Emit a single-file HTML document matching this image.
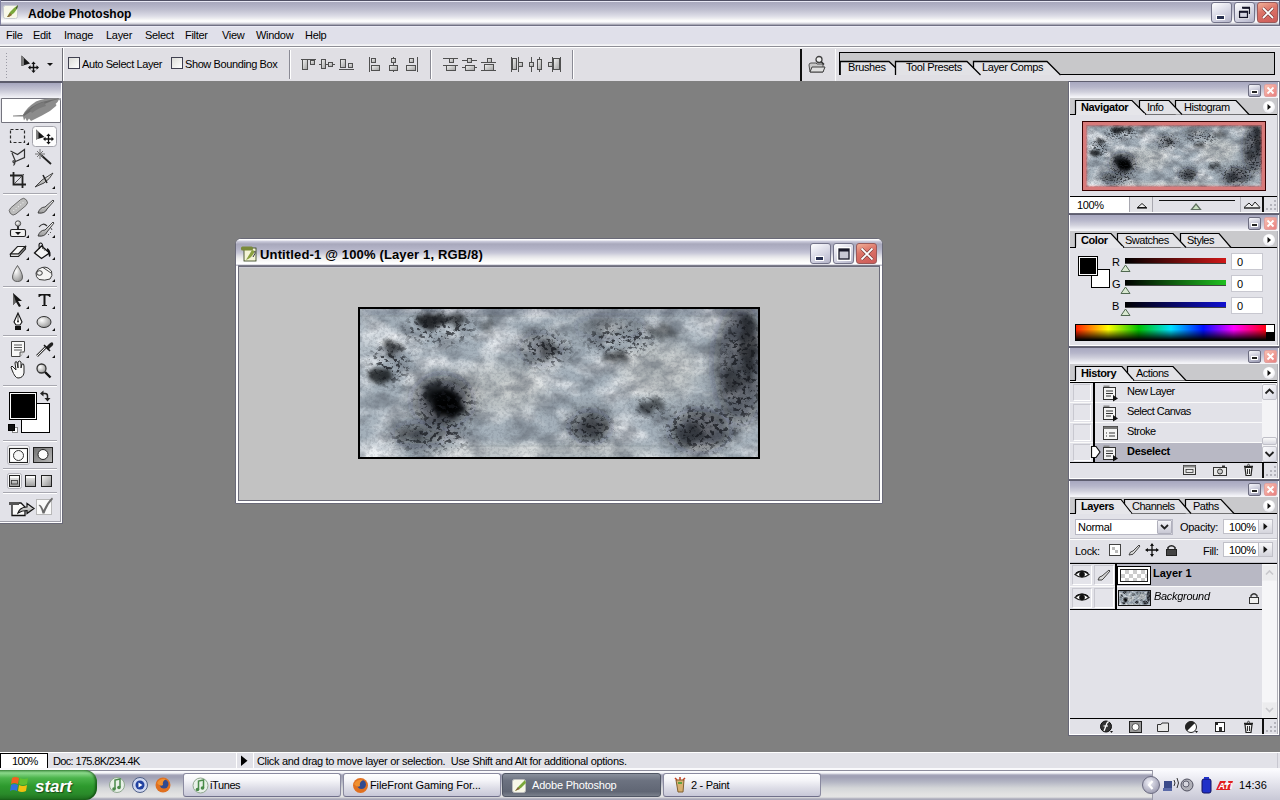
<!DOCTYPE html>
<html><head><meta charset="utf-8">
<style>
*{margin:0;padding:0;box-sizing:border-box}
html,body{width:1280px;height:800px;overflow:hidden;background:#808080;font-family:"Liberation Sans",sans-serif;font-size:11px;color:#000}
.a{position:absolute}
.t{position:absolute;white-space:nowrap;line-height:1}
/* title bar */
#title{left:0;top:0;width:1280px;height:26px;background:linear-gradient(#505064 0,#505064 1px,#e8e8f4 1px,#e8e8f4 2px,#a8a8bc 2px,#b0b0c4 5px,#c0c0d0 10px,#dcdce6 16px,#f0f0f2 19px,#ffffff 21px,#f8f8fa 22px,#c8c8d2 24px,#8a8a98 25px);}
#title .bl{left:0;top:24px;width:1280px;height:1px;background:#8a8a9a}
.xpbtn{position:absolute;width:21px;height:21px;border:1px solid #74748a;border-radius:3px;background:linear-gradient(150deg,#ffffff 0,#e4e4ee 35%,#c4c4d6 80%,#b0b0c4 100%)}
.xpclose{border-color:#9a5a5a;background:linear-gradient(160deg,#f0b098 0,#dc7468 40%,#cc5a58 100%)}
#menu{left:0;top:26px;width:1280px;height:20px;background:#e0e0ea}
#menu .t{top:4px;font-size:11px;letter-spacing:-0.3px}
.tah{font-size:11px;letter-spacing:-0.4px}
.sep{left:3px;width:54px;height:2px;background:linear-gradient(#a8a8b0 0 1px,#fff 1px)}
.pmin{width:13px;height:13px;border:1px solid #6c6c80;border-radius:2px;background:linear-gradient(160deg,#f8f8fc,#c8c8d8 50%,#9898b0)}
.pmin:after{content:"";position:absolute;left:3px;top:6px;width:5px;height:2px;background:#222;box-shadow:0 0 0 1px #fff}
.pcls{width:13px;height:13px;border:1px solid #e0a0a0;border-radius:2px;background:linear-gradient(135deg,#f8c0b0,#e88080)}
.sbtn{width:15px;height:16px;background:linear-gradient(135deg,#fcfcfe,#d8d8e2);border:1px solid #c4c4cc;border-radius:2px}
.sbtn svg{position:absolute;left:-1px;top:-1px}
.tbtn{position:absolute;width:158px;height:24px;border:1px solid #8a8aa0;border-bottom-color:#70708a;border-radius:3px;background:linear-gradient(#ffffff,#f4f4f8 30%,#dcdce6 65%,#c8c8d8)}
.cb{width:12px;height:12px;border:1px solid #404050;background:linear-gradient(135deg,#dcdcd8,#fff)}
#opts{left:0;top:46px;width:1280px;height:35px;background:#e0dfe4;border-top:1px solid #8e8e96}
</style></head><body>
<div id="title" class="a">
  <div class="a" style="left:0;top:25px;width:1280px;height:1px;background:#707084"></div>
  <div class="a" style="left:0;top:0;width:1px;height:25px;background:#8080a0"></div>
  <div class="a" style="left:1279px;top:0;width:1px;height:25px;background:#606078"></div>
  <svg class="a" style="left:3px;top:3px" width="16" height="17" viewBox="0 0 16 17">
    <rect x="0.5" y="2.5" width="14" height="13" rx="2" fill="#f8f8e8" stroke="#c8ccd0"/>
    <path d="M4 14 L7 9 L11 5 L15 2 L14 6 L11 10 L7 13 Z" fill="#7aa83a"/>
    <path d="M4 14 L7 10 L9 12 L6 14 Z" fill="#8a6a3a"/>
    <path d="M15 2 L14 6 L13 5 Z" fill="#303030"/>
  </svg>
  <div class="t" style="left:28px;top:8px;font-size:12px;font-weight:bold;color:#000">Adobe Photoshop</div>
  <div class="xpbtn" style="left:1211px;top:2px"><div class="a" style="left:4px;top:12px;width:9px;height:5px;background:#fff"></div><div class="a" style="left:5px;top:13px;width:7px;height:3px;background:#283050"></div></div>
  <div class="xpbtn" style="left:1234px;top:2px">
    <svg class="a" style="left:0;top:0" width="21" height="21"><path d="M7.5 5 H14.5 V11" fill="none" stroke="#fff" stroke-width="3"/><rect x="4.5" y="8.5" width="8" height="6" fill="none" stroke="#fff" stroke-width="2.6"/><path d="M7.5 5 H14.5 V11" fill="none" stroke="#141428" stroke-width="1.4"/><path d="M7 4.6 H15" stroke="#141428" stroke-width="1.8"/><rect x="4.5" y="8.5" width="8" height="6" fill="#d4d4e0" stroke="#141428" stroke-width="1.3"/><rect x="4" y="7.8" width="9" height="2" fill="#141428"/></svg>
  </div>
  <div class="xpbtn xpclose" style="left:1257px;top:2px">
    <svg class="a" style="left:0;top:0" width="21" height="21"><path d="M5 5 L15 15 M15 5 L5 15" stroke="#603030" stroke-width="3"/><path d="M5 5 L15 15 M15 5 L5 15" stroke="#fff" stroke-width="1.8"/></svg>
  </div>
</div>
<div id="menu" class="a">
  <div class="a" style="left:0;top:0;width:1280px;height:1px;background:#ececf6"></div>
  <div class="a" style="left:0;top:18px;width:1280px;height:2px;background:linear-gradient(#ececf0,#f8f8fa)"></div>
  <div class="t" style="left:6px">File</div>
  <div class="t" style="left:33px">Edit</div>
  <div class="t" style="left:64px">Image</div>
  <div class="t" style="left:106px">Layer</div>
  <div class="t" style="left:145px">Select</div>
  <div class="t" style="left:185px">Filter</div>
  <div class="t" style="left:222px">View</div>
  <div class="t" style="left:256px">Window</div>
  <div class="t" style="left:305px">Help</div>
</div>
<div id="opts" class="a">
  <div class="a" style="left:0;top:0;width:1280px;height:1px;background:#fff"></div>
  <!-- gripper -->
  <div class="a" style="left:6px;top:6px;width:1px;height:25px;background:repeating-linear-gradient(#9a9aa4 0 1px,transparent 1px 3px)"></div>
  <svg class="a" style="left:19px;top:7px" width="36" height="20" viewBox="0 0 36 20">
    <path d="M2.5 1.5 L11 9.5 L2.5 12 Z" fill="#151515"/>
    <path d="M2.5 1.5 L5 4 V11 L2.5 12 Z" fill="#7a7a7a"/>
    <path d="M14.5 9.5 V17 M10.5 13.5 H18.5" stroke="#111" stroke-width="1.4"/>
    <path d="M14.5 7.5 L12.3 10 H16.7 Z M14.5 19 L12.3 16.5 H16.7 Z M9 13.5 L11.5 11.3 V15.7 Z M20 13.5 L17.5 11.3 V15.7 Z" fill="#111"/>
    <path d="M28 9 H34 L31 12 Z" fill="#111"/>
  </svg>
  <div class="a" style="left:62px;top:1px;width:1px;height:33px;background:#707078"></div>
  <div class="a" style="left:63px;top:1px;width:1px;height:33px;background:#fff"></div>
  <div class="a cb" style="left:68px;top:10px"></div>
  <div class="t tah" style="left:82px;top:12px">Auto Select Layer</div>
  <div class="a cb" style="left:171px;top:10px"></div>
  <div class="t tah" style="left:185px;top:12px">Show Bounding Box</div>
  <div class="a" style="left:289px;top:3px;width:1px;height:29px;background:#8a8a94"></div>
  <div class="a" style="left:290px;top:3px;width:1px;height:29px;background:#fff"></div>
  <svg class="a" style="left:295px;top:6px" width="275" height="24" viewBox="295 52 275 24">
    <defs><linearGradient id="agr" x1="0" y1="0" x2="1" y2="1"><stop offset="0" stop-color="#f4f4f4"/><stop offset="1" stop-color="#a0a0a0"/></linearGradient></defs>
    <g fill="url(#agr)" stroke="#505050" stroke-width="1">
      <path d="M301 58.5 H316" fill="none"/>
      <rect x="302.5" y="58.5" width="5" height="10"/><rect x="310.5" y="59.5" width="4" height="4"/>
      <path d="M319 63.5 H335" fill="none"/>
      <rect x="321.5" y="58.5" width="4" height="9"/><rect x="328.5" y="61.5" width="4" height="4"/>
      <path d="M339 68.5 H354" fill="none"/>
      <rect x="340.5" y="58.5" width="5" height="8"/><rect x="348.5" y="62.5" width="4" height="4"/>
      <path d="M369.5 56 V71" fill="none"/>
      <rect x="371.5" y="57.5" width="4" height="4"/><rect x="371.5" y="64.5" width="8" height="5"/>
      <path d="M393.5 56 V71" fill="none"/>
      <rect x="391.5" y="57.5" width="4" height="4"/><rect x="389.5" y="64.5" width="8" height="5"/>
      <path d="M417.5 56 V71" fill="none"/>
      <rect x="409.5" y="57.5" width="4" height="4"/><rect x="406.5" y="64.5" width="9" height="5"/>
      <path d="M443 57.5 H458 M443 64.5 H458" fill="none"/>
      <rect x="449.5" y="57.5" width="4" height="4"/><rect x="446.5" y="64.5" width="9" height="5"/>
      <path d="M462 59.5 H477 M462 66.5 H477" fill="none"/>
      <rect x="467.5" y="57.5" width="4" height="4"/><rect x="465.5" y="64.5" width="9" height="5"/>
      <path d="M481 61.5 H496 M481 69.5 H496" fill="none"/>
      <rect x="487.5" y="57.5" width="4" height="4"/><rect x="484.5" y="63.5" width="9" height="6"/>
      <path d="M511.5 56 V71 M518.5 56 V71" fill="none"/>
      <rect x="512.5" y="57.5" width="4" height="11"/><rect x="518.5" y="61.5" width="4" height="4"/>
      <path d="M531.5 56 V71 M539.5 56 V71" fill="none"/>
      <rect x="529.5" y="61.5" width="4" height="4"/><rect x="537.5" y="58.5" width="4" height="10"/>
      <path d="M552.5 56 V71 M560.5 56 V71" fill="none"/>
      <rect x="548.5" y="61.5" width="4" height="4"/><rect x="553.5" y="57.5" width="6" height="11"/>
    </g>
  </svg>
  <div class="a" style="left:430px;top:3px;width:1px;height:29px;background:#8a8a94"></div>
  <div class="a" style="left:431px;top:3px;width:1px;height:29px;background:#fff"></div>
  <div class="a" style="left:572px;top:3px;width:1px;height:29px;background:#8a8a94"></div>
  <div class="a" style="left:573px;top:3px;width:1px;height:29px;background:#fff"></div>
  <div class="a" style="left:800px;top:2px;width:1.5px;height:32px;background:#101010"></div><div class="a" style="left:835px;top:2px;width:1px;height:32px;background:#fafafa"></div>
  <!-- file browser icon -->
  <svg class="a" style="left:808px;top:8px" width="22" height="20" viewBox="0 0 22 20">
    <path d="M1 10 Q1 8 3 8 H8 L9 9 H15 V17 H2 Z" fill="#c8c8c8" stroke="#505050"/>
    <path d="M2 17 L4 12 H17 L15 17 Z" fill="#e0e0e0" stroke="#404040"/>
    <circle cx="11" cy="4.5" r="3" fill="#f0f0f0" stroke="#404040" stroke-width="1.3"/>
    <path d="M13 6.5 L16 9.5" stroke="#303030" stroke-width="1.6"/>
  </svg>
  <!-- palette well -->
  <div class="a" style="left:839px;top:5px;width:436px;height:23px;background:#c8c8ca;border:1px solid #000;border-width:1.5px 1.5px 1px 1.5px"></div>
  <svg class="a" style="left:840px;top:13px" width="230" height="16" viewBox="840 59 230 16">
    <path d="M840.2 74 V60.5 H889 L898 69 V74" fill="#e2e2e6" stroke="#000" stroke-width="1.3"/>
    <path d="M973.5 74 V60.5 H1047 L1060.5 74" fill="#e2e2e6" stroke="#000" stroke-width="1.3"/>
    <path d="M895.5 74 V60.5 H967 L980.5 74" fill="#e2e2e6" stroke="#000" stroke-width="1.3"/>
  </svg>
  <div class="t tah" style="left:848px;top:15px">Brushes</div>
  <div class="t tah" style="left:906px;top:15px">Tool Presets</div>
  <div class="t tah" style="left:982px;top:15px">Layer Comps</div>
</div>
<!-- toolbox -->
<div id="tools" class="a" style="left:0;top:81px;width:63px;height:443px;background:#e2e2e8">
  <div class="a" style="left:0;top:0;width:63px;height:2px;background:#5c5c6c"></div>
  <div class="a" style="left:62px;top:0;width:1px;height:443px;background:#6a6a78"></div>
  <div class="a" style="left:61px;top:2px;width:1px;height:440px;background:#fff"></div>
  <div class="a" style="left:0;top:442px;width:63px;height:1px;background:#6a6a78"></div>
  <div class="a" style="left:0;top:441px;width:62px;height:1px;background:#fff"></div>
  <div class="a" style="left:0;top:440px;width:61px;height:1px;background:#a0a0aa"></div>
  <div class="a" style="left:60px;top:17px;width:1px;height:424px;background:#a0a0aa"></div>
  <div class="a" style="left:0;top:2px;width:61px;height:15px;background:linear-gradient(#a6a6be,#c8c8d6 50%,#f4f4f8)"></div>
  <!-- feather box -->
  <div class="a" style="left:1px;top:17px;width:60px;height:25px;background:#fff;border:1px solid #74747e;border-radius:0 3px 0 0"></div>
  <svg class="a" style="left:0px;top:17px" width="62" height="25" viewBox="0 98 62 25">
    <path d="M13 115.5 Q18 114.8 23 115 Q26 108 36 101.5 Q46 97.5 59.5 98.5 Q58 102 55.5 104 Q57 104.5 56 106 Q50 112 42 115.5 Q36 118.5 31 121 L29 118.5 L27 121.5 L25.5 118 L24 120.5 L23 116.5 Q18 116.5 13 116.5 Z" fill="#8c8c8c"/>
    <path d="M23 115 Q30 106 42 102 Q50 99.5 59.5 98.5 Q50 101 42 105 Q32 110 24 116 Z" fill="#6c6c6c"/>
    <path d="M30 110 Q36 104 44 102 L46 106 Q38 108 32 113 Z" fill="#7a7a7a"/>
  </svg>
  <!-- separators -->
  <div class="a sep" style="top:112px"></div>
  <div class="a sep" style="top:205px"></div>
  <div class="a sep" style="top:254px"></div>
  <div class="a sep" style="top:304px"></div>
  <div class="a sep" style="top:359px"></div>
  <div class="a sep" style="top:387px"></div>
  <div class="a sep" style="top:411px"></div>
</div>
<svg class="a" style="left:0;top:0" width="63" height="524" viewBox="0 0 63 524">
  <defs>
    <linearGradient id="gg" x1="0" y1="0" x2="1" y2="1"><stop offset="0" stop-color="#fafafa"/><stop offset="1" stop-color="#8c8c8c"/></linearGradient>
    <linearGradient id="gv" x1="0" y1="0" x2="0" y2="1"><stop offset="0" stop-color="#f4f4f4"/><stop offset="1" stop-color="#9a9a9a"/></linearGradient>
    <linearGradient id="gqm" x1="0" y1="0" x2="1" y2="1"><stop offset="0" stop-color="#707070"/><stop offset="1" stop-color="#b8b8b8"/></linearGradient>
    <radialGradient id="gr" cx="0.35" cy="0.35" r="0.8"><stop offset="0" stop-color="#fff"/><stop offset="1" stop-color="#8a8a8a"/></radialGradient>
  </defs>
  <g fill="#111">
    <!-- corner triangles -->
    <path d="M29 142 V145 H26 Z M29 164 V167 H26 Z M55 186 V189 H52 Z M29 213 V216 H26 Z M55 213 V216 H52 Z M29 235 V238 H26 Z M55 235 V238 H52 Z M29 257 V260 H26 Z M55 257 V260 H52 Z M29 279 V282 H26 Z M55 279 V282 H52 Z M29 306 V309 H26 Z M55 306 V309 H52 Z M29 328 V331 H26 Z M55 328 V331 H52 Z M29 355 V358 H26 Z M55 355 V358 H52 Z"/>
  </g>
  <!-- marquee -->
  
  <!-- move selected -->
  <rect x="32.5" y="126.5" width="24" height="20" rx="3" fill="#fdfdfd" stroke="#a4a4ac"/>
  <path d="M36 129.5 L44.5 137 L36 139.5 Z" fill="#141414"/>
  <path d="M36 129.5 L38.5 132 V138.5 L36 139.5 Z" fill="#808080"/>
  <path d="M48.5 135.5 V142.5 M45 139 H52" stroke="#111" stroke-width="1.3"/>
  <path d="M48.5 133.5 L46.3 136 H50.7 Z M48.5 144.5 L46.3 142 H50.7 Z M43 139 L45.5 136.8 V141.2 Z M54 139 L51.5 136.8 V141.2 Z" fill="#111"/>
  <!-- marquee fix -->
  <rect x="10.5" y="129.5" width="14" height="13" fill="none" stroke="#2a2a2a" stroke-width="1.2" stroke-dasharray="3 2"/>
<!-- lasso -->
  <path d="M10.5 151 L17.5 154.5 L24.5 149.5 V157.5 L15.5 161.5 L12 153" fill="none" stroke="#303030" stroke-width="1.2"/>
  <path d="M15.5 161.5 Q12.5 160 13 162 Q14 164 15 162 Q15 164.5 13.5 165.5" fill="none" stroke="#303030" stroke-width="1.1"/>
  <!-- magic wand -->
  <path d="M41 155 L51 164" stroke="#222" stroke-width="1.8"/>
  <path d="M40 149 V159 M35 154 H45 M37 151 L43 157 M43 151 L37 157" stroke="#666" stroke-width="0.9"/>
  <!-- crop -->
  <path d="M13.5 172 V184.5 H26 M10 175.5 H22.5 V188" fill="none" stroke="#222" stroke-width="1.8"/>
  <path d="M14 184 L24 174" stroke="#444" stroke-width="0.9"/>
  <!-- slice -->
  <path d="M35 187 L42 180 L53 173 Q50 179 44 183 Z" fill="url(#gv)" stroke="#333" stroke-width="0.9"/>
  <path d="M43 175 L47 183" stroke="#222" stroke-width="1.5"/>
  <!-- healing -->
  <g transform="rotate(-40 18 207)"><rect x="8" y="203" width="21" height="8" rx="4" fill="#bdbdbd" stroke="#666" stroke-width="0.9"/><path d="M12 207 h1 M15 207 h1 M18 207 h1 M21 207 h1 M24 207 h1" stroke="#eee" stroke-width="1"/></g>
  <!-- brush -->
  <path d="M38 213 Q40 207 45 207 L53 200 L54 201 L47 209 Q45 214 38 213 Z" fill="url(#gv)" stroke="#333" stroke-width="0.9"/>
  <!-- stamp -->
  <circle cx="18" cy="223.5" r="2.7" fill="url(#gr)" stroke="#333" stroke-width="0.8"/>
  <rect x="17" y="226" width="2" height="4" fill="#333"/>
  <rect x="10.5" y="229.5" width="15" height="7" rx="1.5" fill="#f0f0f0" stroke="#222" stroke-width="1.1"/>
  <path d="M15 232 H21 L18 235 Z" fill="#111"/>
  <!-- history brush -->
  <path d="M38 236 Q40 230 45 230 L53 222 L54 223 L47 232 Q45 237 38 236 Z" fill="url(#gv)" stroke="#333" stroke-width="0.9"/>
  <path d="M39 227 Q43 222 47 226" fill="none" stroke="#333" stroke-width="1.2"/>
  <path d="M51 228 l1 2 M50 232 l1 1 M48 234 l1 1" stroke="#333" stroke-width="0.8"/>
  <!-- eraser -->
  <path d="M10.5 254 L17.5 246.5 H25.5 L18.5 254 Z" fill="#f6f6f6" stroke="#222" stroke-width="1.1"/>
  <path d="M10.5 254 V256.5 H18.5 L25.5 249 V246.5 L18.5 254 Z" fill="#dcdcdc" stroke="#222" stroke-width="1.1"/>
  <!-- bucket -->
  <path d="M34.5 253 L41.5 246 L49.5 253 L41.5 258.5 Z" fill="#f4f4f4" stroke="#111" stroke-width="1.3"/>
  <path d="M39.5 249 Q38 242.5 41 243 Q43 243.5 43 249" fill="none" stroke="#111" stroke-width="1.1"/>
  <path d="M42.5 247 L45 251" stroke="#666" stroke-width="0.8"/>
  <path d="M47 248 Q51 250 50.5 256 L49 257 Q48.5 252 47 250 Z" fill="#111"/>
  <!-- blur drop -->
  <path d="M17.5 265.5 Q12.5 273 12.5 277 Q12.5 281.5 17.5 281.5 Q22.5 281.5 22.5 277 Q22.5 273 17.5 265.5 Z" fill="url(#gr)" stroke="#555" stroke-width="0.9"/>
  <!-- smudge -->
  <path d="M36 273 Q37 268.5 42 267.5 Q45 266.5 48 268 L51.5 271 Q53 276 50 279 Q45 281 39 279.5 Q35.5 277 36 273 Z" fill="#f4f4f4" stroke="#3a3a3a" stroke-width="1"/>
  <path d="M43 267.5 L51 273" stroke="#3a3a3a" stroke-width="0.9"/>
  <ellipse cx="39.5" cy="273" rx="2.8" ry="2.3" fill="none" stroke="#3a3a3a" stroke-width="1"/>
  <!-- path select arrow -->
  <path d="M13 293 L13 305 L16 302 L19 307 L21 306 L18 301 L22 301 Z" fill="#151515"/>
  <path d="M13 293 V305 L16 302 Z" fill="#666"/>
  <!-- type T -->
  <path d="M38.5 294 H50.5 V297 H49.5 Q49 295.5 47 295.5 H45.5 V305 H47 V306 H42 V305 H43.5 V295.5 H42 Q40 295.5 39.5 297 H38.5 Z" fill="#151515"/>
  <!-- pen -->
  <path d="M18 313 L14 322 L16 325 H20 L22 322 Z" fill="#fff" stroke="#111" stroke-width="1.1"/>
  <path d="M18 314 V321" stroke="#111" stroke-width="0.8"/><circle cx="18" cy="321.5" r="0.9" fill="#111"/>
  <rect x="15" y="326" width="6" height="4" fill="#111"/>
  <!-- ellipse -->
  <ellipse cx="44" cy="322" rx="7" ry="5.5" fill="url(#gr)" stroke="#333" stroke-width="1"/>
  <!-- notes -->
  <path d="M11.5 341.5 H24.5 V351 L20 356.5 H11.5 Z" fill="#f8f8f8" stroke="#444" stroke-width="1"/>
  <path d="M20 356.5 V352 H24.5" fill="#ddd" stroke="#444" stroke-width="0.9"/>
  <path d="M14 345 H22 M14 347.5 H22 M14 350 H22" stroke="#444" stroke-width="0.9"/>
  <!-- eyedropper -->
  <path d="M37 356 L46 347" stroke="#444" stroke-width="2.6"/><path d="M37 356 L46 347" stroke="#eee" stroke-width="1"/>
  <path d="M46 347 L49 344 Q52 341 53 343 Q54 345 51 347 L48 350 Z" fill="#222"/>
  <path d="M44 345 L50 351" stroke="#111" stroke-width="1.6"/>
  <!-- hand -->
  <path d="M12 370 Q10 366 12 366 L16 370 L15 363 Q15 361 17 362 L18 368 L18 362 Q19 360 21 362 L21 368 L22 364 Q24 363 24 366 L24 373 Q23 378 18 378 Q15 378 12 370 Z" fill="#f8f8f8" stroke="#222" stroke-width="1"/>
  <!-- zoom -->
  <circle cx="41.5" cy="368.5" r="4.5" fill="url(#gr)" stroke="#333" stroke-width="1.3"/>
  <path d="M45 372 L50.5 377.5" stroke="#111" stroke-width="2.4"/>
  <!-- colors -->
  <rect x="21.5" y="403.5" width="28" height="29" fill="#fff" stroke="#000"/>
  <rect x="9.5" y="392.5" width="27" height="27" fill="#000" stroke="#000"/>
  <rect x="10.5" y="393.5" width="25" height="25" fill="none" stroke="#fff"/>
  <rect x="11.5" y="394.5" width="23" height="23" fill="#000"/>
  <path d="M42 393.5 H45 Q47.5 393.5 47.5 396 V398.5" fill="none" stroke="#222" stroke-width="1.5"/><path d="M40 393.5 L43.5 390.5 V396.5 Z M44.5 398 H50.5 L47.5 401.5 Z" fill="#222"/>
  <rect x="12.5" y="427.5" width="5" height="5" fill="#fff" stroke="#888"/>
  <rect x="8.5" y="424.5" width="6" height="6" fill="#111" stroke="#000"/>
  <!-- quick mask -->
  <rect x="7.5" y="445.5" width="22" height="19" rx="2.5" fill="#fafafa" stroke="#b4b4bc"/>
  <rect x="9.5" y="448.5" width="18" height="14" fill="#fff" stroke="#222" stroke-width="1.1"/>
  <circle cx="18.5" cy="455.5" r="5" fill="#f6f6f6" stroke="#333"/>
  <rect x="33.5" y="447.5" width="19" height="15" fill="url(#gqm)" stroke="#222"/>
  <circle cx="43" cy="454.5" r="5" fill="#fcfcfc" stroke="#222"/>
  <!-- screen modes -->
  <rect x="7.5" y="473.5" width="14" height="15" rx="2" fill="#f6f6f8" stroke="#b0b0b8"/>
  <rect x="9.5" y="475.5" width="10" height="11" fill="url(#gv)" stroke="#222"/>
  <rect x="10" y="476" width="9" height="2" fill="#fafafa"/>
  <rect x="11.5" y="480.5" width="6" height="3.5" fill="none" stroke="#333" stroke-width="0.8"/>
  <rect x="25.5" y="475.5" width="10" height="11" fill="url(#gv)" stroke="#222"/>
  <rect x="26" y="476" width="9" height="2" fill="#fafafa"/>
  <rect x="41.5" y="475.5" width="10" height="11" fill="url(#gg)" stroke="#222"/>
  <!-- jump to IR -->
  <path d="M12 503 H21 L25 507 V515.5 H12 Z" fill="#fafafa" stroke="#111" stroke-width="1.3"/>
  <rect x="9" y="502" width="10" height="3" fill="#555"/>
  <path d="M18 513 Q20 507 27 507 V503.5 L34 508.5 L27 513.5 V510.5 Q22 510.5 18 513 Z" fill="url(#gv)" stroke="#111" stroke-width="1.2"/>
  <rect x="36.5" y="499.5" width="15" height="15" fill="#fafafa" stroke="#b8b8b8"/>
  <path d="M38.5 505 Q41 504 43.5 510 Q47 502 52 497.5 L53 499 Q48 504 44.5 513.5 L42.5 513.5 Q41 507 38.5 505 Z" fill="#6a6a6a"/>
</svg>
<!-- doc window -->
<div id="doc" class="a" style="left:235px;top:238px;width:648px;height:266px;background:#fff;border:1px solid #6a6a78;border-radius:6px 6px 0 0;overflow:hidden">
  <div class="a" style="left:0;top:0;width:646px;height:27px;background:linear-gradient(#ffffff 0,#ffffff 1px,#d0d0e0 2px,#a8a8bc 5px,#b4b4c8 10px,#c8c8d8 14px,#e0e0e6 17px,#f2f2f2 20px,#ffffff 24px,#ffffff 25px,#c0c0cc 26px)"></div>
  <div class="a" style="left:2px;top:27px;width:642px;height:235px;background:#c2c2c2;border:1px solid #6c6c7a;border-top-width:1px"></div>
  <div class="a" style="left:2px;top:26px;width:642px;height:1px;background:#7c7c8c"></div>
</div>
<div class="a" style="left:239px;top:267px;width:640px;height:1px;background:#cacad2"></div>
<svg class="a" style="left:240px;top:245px" width="18" height="17" viewBox="0 0 18 17">
  <rect x="4" y="3" width="12" height="13" fill="#f4f4d8" stroke="#2a3a10" stroke-width="0.8"/>
  <rect x="1" y="1.5" width="12" height="4" rx="1.5" fill="#7a8a3a"/>
  <path d="M6 15 Q12 13 15 6 L12 5 Q9 10 6 15 Z" fill="#8aa040"/>
  <path d="M15 6 Q16 8 13 12" fill="none" stroke="#334" stroke-width="1"/>
</svg>
<div class="t" style="left:260px;top:248px;font-size:13px;font-weight:bold;letter-spacing:0.15px">Untitled-1 @ 100% (Layer 1, RGB/8)</div>
<div class="xpbtn" style="left:810px;top:243px"><div class="a" style="left:4px;top:12px;width:9px;height:5px;background:#fff"></div><div class="a" style="left:5px;top:13px;width:7px;height:3px;background:#283050"></div></div>
<div class="xpbtn" style="left:833px;top:243px"><svg class="a" style="left:0;top:0" width="21" height="21"><rect x="4" y="4" width="12" height="12" fill="none" stroke="#fff" stroke-width="2"/><rect x="5" y="5" width="10" height="10" fill="#c8c8d4" stroke="#181828" stroke-width="1.3"/><rect x="5" y="5" width="10" height="2.5" fill="#181828"/></svg></div>
<div class="xpbtn xpclose" style="left:856px;top:243px"><svg class="a" style="left:0;top:0" width="21" height="21"><path d="M4.5 4.5 L15.5 15.5 M15.5 4.5 L4.5 15.5" stroke="#603030" stroke-width="3"/><path d="M4.5 4.5 L15.5 15.5 M15.5 4.5 L4.5 15.5" stroke="#fff" stroke-width="1.8"/></svg></div>
<!-- image -->
<div class="a" style="left:358px;top:307px;width:402px;height:152px;border:2px solid #000;background:#a4acb4;overflow:hidden" id="img">
<svg class="a" style="left:0;top:0" width="398" height="148" viewBox="0 0 398 148">
  <defs>
    <filter id="tb" x="0" y="0" width="100%" height="100%">
      <feTurbulence type="fractalNoise" baseFrequency="0.04 0.06" numOctaves="4" seed="7"/>
      <feColorMatrix type="matrix" values="0 0 0 0 0.12  0 0 0 0 0.14  0 0 0 0 0.17  -3.2 0 0 0 1.85" />
    </filter>
    <filter id="tl" x="0" y="0" width="100%" height="100%">
      <feTurbulence type="fractalNoise" baseFrequency="0.025 0.045" numOctaves="3" seed="3"/>
      <feColorMatrix type="matrix" values="0 0 0 0 0.84  0 0 0 0 0.87  0 0 0 0 0.9  2.6 0 0 0 -1.1" />
    </filter>
    <filter id="fine" x="0" y="0" width="100%" height="100%">
      <feTurbulence type="fractalNoise" baseFrequency="0.35" numOctaves="2" seed="11"/>
      <feColorMatrix type="matrix" values="0 0 0 0 0.1  0 0 0 0 0.12  0 0 0 0 0.15  -7 0 0 0 3.6" />
    </filter>
    <filter id="disp" x="-50%" y="-50%" width="200%" height="200%" color-interpolation-filters="sRGB">
      <feTurbulence type="fractalNoise" baseFrequency="0.09" numOctaves="2" seed="5" result="t"/>
      <feDisplacementMap in="SourceGraphic" in2="t" scale="16" xChannelSelector="R" yChannelSelector="G" result="d"/>
      <feGaussianBlur in="d" stdDeviation="2.2"/>
    </filter>
    <filter id="bl8" x="-100%" y="-100%" width="300%" height="300%"><feGaussianBlur stdDeviation="8"/></filter>
    <filter id="spk" x="-60%" y="-60%" width="220%" height="220%" color-interpolation-filters="sRGB">
      <feGaussianBlur in="SourceAlpha" stdDeviation="7" result="m"/>
      <feTurbulence type="fractalNoise" baseFrequency="0.22 0.26" numOctaves="4" seed="21" result="n"/>
      <feColorMatrix in="n" type="matrix" values="0 0 0 0 0.08  0 0 0 0 0.09  0 0 0 0 0.11  -9 0 0 0 4.2" result="s"/>
      <feComposite in="s" in2="m" operator="in"/>
    </filter>
    <filter id="bl4" x="-100%" y="-100%" width="300%" height="300%"><feGaussianBlur stdDeviation="4"/></filter>
  </defs>
  <g id="texg">
  <rect width="398" height="148" fill="#a4b0ba"/>
  <rect width="398" height="148" filter="url(#tl)"/>
  <g fill="#cfd0cc" opacity="0.6">
    <ellipse cx="300" cy="60" rx="40" ry="30" filter="url(#bl8)"/>
    <ellipse cx="140" cy="80" rx="45" ry="25" filter="url(#bl8)"/>
    <ellipse cx="180" cy="142" rx="120" ry="6" filter="url(#bl4)"/>
  </g>
  <rect width="398" height="148" filter="url(#tb)" opacity="0.55"/>
  <rect width="398" height="148" filter="url(#fine)" opacity="0.15"/>
  <g fill="#0c1014">
    <ellipse cx="82" cy="92" rx="30" ry="26" filter="url(#bl8)" opacity="0.55"/>
    <ellipse cx="380" cy="55" rx="26" ry="60" filter="url(#bl8)" opacity="0.5"/>
    <rect x="0" y="0" width="398" height="4" filter="url(#bl4)" opacity="0.35"/>
    <ellipse cx="60" cy="125" rx="30" ry="10" filter="url(#bl8)" opacity="0.45"/>
    <ellipse cx="230" cy="118" rx="20" ry="15" filter="url(#bl8)" opacity="0.55"/>
    <ellipse cx="340" cy="122" rx="30" ry="20" filter="url(#bl8)" opacity="0.55"/>
    <ellipse cx="250" cy="18" rx="40" ry="9" filter="url(#bl8)" opacity="0.3"/>
    <ellipse cx="180" cy="40" rx="20" ry="15" filter="url(#bl8)" opacity="0.35"/>
  </g>
  <g fill="#06080a" filter="url(#disp)">
    <ellipse cx="86" cy="95" rx="17" ry="14"/>
    <ellipse cx="72" cy="86" rx="9" ry="11" opacity="0.7"/>
    <ellipse cx="20" cy="67" rx="11" ry="8" opacity="0.75"/>
    <ellipse cx="72" cy="12" rx="16" ry="8" opacity="0.8"/>
    <ellipse cx="96" cy="10" rx="10" ry="7" opacity="0.6"/>
    <ellipse cx="31" cy="39" rx="9" ry="6" opacity="0.6"/>
    <ellipse cx="388" cy="40" rx="8" ry="36" opacity="0.5"/>
    <ellipse cx="372" cy="70" rx="8" ry="14" opacity="0.35"/>
    <ellipse cx="300" cy="22" rx="14" ry="7" opacity="0.45"/>
    <ellipse cx="255" cy="47" rx="14" ry="5" opacity="0.55"/>
    <ellipse cx="290" cy="98" rx="11" ry="7" opacity="0.55"/>
    <ellipse cx="190" cy="40" rx="10" ry="8" opacity="0.45"/>
    <ellipse cx="128" cy="16" rx="6" ry="8" opacity="0.4"/>
    <ellipse cx="50" cy="125" rx="14" ry="6" opacity="0.4"/>
    <ellipse cx="235" cy="118" rx="12" ry="10" opacity="0.35"/>
    <ellipse cx="330" cy="125" rx="14" ry="10" opacity="0.4"/>
  </g>
  <path d="M95 137 H330" stroke="#303840" stroke-width="1.2" opacity="0.15"/>
  <ellipse cx="86" cy="96" rx="13" ry="10" fill="#040506" filter="url(#bl4)" opacity="0.85"/>
  <g fill="#000" filter="url(#spk)" opacity="0.75">
        <ellipse cx="80" cy="20" rx="36" ry="14"/>
        <ellipse cx="30" cy="55" rx="20" ry="20"/>
        <ellipse cx="85" cy="95" rx="30" ry="24"/>
        <ellipse cx="70" cy="128" rx="40" ry="12"/>
        <ellipse cx="185" cy="40" rx="25" ry="16"/>
        <ellipse cx="260" cy="30" rx="35" ry="14"/>
        <ellipse cx="382" cy="60" rx="20" ry="55"/>
        <ellipse cx="230" cy="118" rx="22" ry="15"/>
        <ellipse cx="340" cy="120" rx="35" ry="22"/>
        <ellipse cx="290" cy="98" rx="15" ry="8"/>
  </g>
  </g>
</svg>
</div>
<!-- right panels -->
<div class="a" style="left:1068px;top:81px;width:212px;height:133px;background:#e2e2e8"></div>
<div class="a" style="left:1069px;top:81px;width:210px;height:17px;background:linear-gradient(#5e5e70 0,#5e5e70 1px,#a8a8c0 1px,#b6b6ca 6px,#d0d0dc 11px,#f4f4f8 16px)"></div>
<div class="a" style="left:1068px;top:81px;width:1px;height:133px;background:#686878"></div>
<div class="a" style="left:1069px;top:82px;width:1px;height:131px;background:#fff"></div>
<div class="a" style="left:1279px;top:81px;width:1px;height:133px;background:#7c7c88"></div>
<div class="a" style="left:1278px;top:82px;width:1px;height:131px;background:#fff"></div>
<div class="a" style="left:1277px;top:98px;width:1px;height:114px;background:#b0b0b8"></div>
<div class="a" style="left:1068px;top:213px;width:212px;height:1px;background:#686878"></div>
<div class="a" style="left:1069px;top:212px;width:210px;height:1px;background:#fff"></div>
<div class="a pmin" style="left:1248px;top:84px"></div>
<div class="a pcls" style="left:1264px;top:84px"><svg width="11" height="11" class="a" style="left:0;top:0"><path d="M2.5 2.5 L8.5 8.5 M8.5 2.5 L2.5 8.5" stroke="#fff" stroke-width="1.8"/></svg></div>
<div class="a" style="left:1070px;top:98px;width:207px;height:17px;background:#c9c9cc"></div>
<div class="a" style="left:1070px;top:114px;width:207px;height:1px;background:#000"></div>
<svg class="a" style="left:1068px;top:98px" width="212" height="18" viewBox="1068 98 212 18">
<path d="M1175.5 114.5 V100.5 H1236 L1249 114.5" fill="#e2e2e6" stroke="#000" stroke-width="1.2"/>
<path d="M1139.5 114.5 V100.5 H1169 L1182 114.5" fill="#e2e2e6" stroke="#000" stroke-width="1.2"/>
<path d="M1070 114.5 H1075.5 V100.5 H1132 L1146 114.5" fill="#e6e6ea" stroke="#000" stroke-width="1.2"/>
<rect x="1076" y="113.5" width="69" height="1.5" fill="#e6e6ea"/>
</svg>
<div class="t" style="left:1081px;top:102px;font-size:11px;font-weight:bold;letter-spacing:-0.4px">Navigator</div>
<div class="t" style="left:1147px;top:102px;font-size:11px;letter-spacing:-0.5px">Info</div>
<div class="t" style="left:1184px;top:102px;font-size:11px;letter-spacing:-0.5px">Histogram</div>
<div class="a" style="left:1263px;top:101px;width:12px;height:12px;border-radius:6px;background:radial-gradient(circle at 50% 40%,#ffffff 40%,#d8d8e4 100%)"><svg class="a" style="left:0;top:0" width="12" height="12"><path d="M4.5 3 L8 6 L4.5 9 Z" fill="#111"/></svg></div>
<div class="a" style="left:1082px;top:121px;width:184px;height:70px;border:1px solid #300;background:#d87a7a;overflow:hidden">
<svg class="a" style="left:3px;top:3px" width="176" height="62" viewBox="0 0 398 148" preserveAspectRatio="none"><use href="#texg"/></svg>
<div class="a" style="left:3px;top:3px;width:176px;height:62px;box-shadow:inset 0 0 2px 1px rgba(200,60,60,0.6)"></div>
</div>
<div class="a" style="left:1070px;top:196px;width:207px;height:1px;background:#000"></div>
<div class="a" style="left:1070px;top:197px;width:60px;height:15px;background:#fff;border-right:1px solid #a8a8b0"></div>
<div class="t" style="left:1077px;top:200px;font-size:11px;letter-spacing:-0.4px">100%</div>
<div class="a" style="left:1131px;top:197px;width:22px;height:15px;background:#e4e4e8;border-right:1px solid #a8a8b0"></div>
<svg class="a" style="left:1136px;top:201px" width="12" height="8"><path d="M1.5 6.5 L6 2.5 L10.5 6.5 Z" fill="#f0f0f0" stroke="#222"/><path d="M1 7 H11" stroke="#111" stroke-width="1.2"/></svg>
<div class="a" style="left:1159px;top:200px;width:76px;height:1px;background:#111"></div>
<svg class="a" style="left:1190px;top:202px" width="12" height="9"><path d="M1.5 7.5 L6 2 L10.5 7.5 Z" fill="#c8e0c0" stroke="#607060" stroke-width="1.2"/></svg>
<div class="a" style="left:1240px;top:197px;width:1px;height:15px;background:#b0b0b8"></div>
<svg class="a" style="left:1243px;top:200px" width="18" height="9"><path d="M1 7.5 L6 3 L9 6 L12 2 L17 7.5" fill="#f0f0f0" stroke="#222"/><path d="M1 8 H17" stroke="#111" stroke-width="1.3"/></svg>
<div class="a" style="left:1262px;top:197px;width:2px;height:15px;background:#111"></div>
<svg class="a" style="left:1265px;top:199px" width="12" height="12"><g fill="#b4b4bc"><rect x="9" y="1" width="2" height="2"/><rect x="5" y="5" width="2" height="2"/><rect x="9" y="5" width="2" height="2"/><rect x="1" y="9" width="2" height="2"/><rect x="5" y="9" width="2" height="2"/><rect x="9" y="9" width="2" height="2"/></g></svg>
<div class="a" style="left:1068px;top:214px;width:212px;height:133px;background:#e2e2e8"></div>
<div class="a" style="left:1069px;top:214px;width:210px;height:17px;background:linear-gradient(#5e5e70 0,#5e5e70 1px,#a8a8c0 1px,#b6b6ca 6px,#d0d0dc 11px,#f4f4f8 16px)"></div>
<div class="a" style="left:1068px;top:214px;width:1px;height:133px;background:#686878"></div>
<div class="a" style="left:1069px;top:215px;width:1px;height:131px;background:#fff"></div>
<div class="a" style="left:1279px;top:214px;width:1px;height:133px;background:#7c7c88"></div>
<div class="a" style="left:1278px;top:215px;width:1px;height:131px;background:#fff"></div>
<div class="a" style="left:1277px;top:231px;width:1px;height:114px;background:#b0b0b8"></div>
<div class="a" style="left:1068px;top:346px;width:212px;height:1px;background:#686878"></div>
<div class="a" style="left:1069px;top:345px;width:210px;height:1px;background:#fff"></div>
<div class="a pmin" style="left:1248px;top:217px"></div>
<div class="a pcls" style="left:1264px;top:217px"><svg width="11" height="11" class="a" style="left:0;top:0"><path d="M2.5 2.5 L8.5 8.5 M8.5 2.5 L2.5 8.5" stroke="#fff" stroke-width="1.8"/></svg></div>
<div class="a" style="left:1070px;top:231px;width:207px;height:17px;background:#c9c9cc"></div>
<div class="a" style="left:1070px;top:247px;width:207px;height:1px;background:#000"></div>
<svg class="a" style="left:1068px;top:231px" width="212" height="18" viewBox="1068 231 212 18">
<path d="M1180.5 247.5 V233.5 H1219 L1231 247.5" fill="#e2e2e6" stroke="#000" stroke-width="1.2"/>
<path d="M1117.5 247.5 V233.5 H1173 L1186 247.5" fill="#e2e2e6" stroke="#000" stroke-width="1.2"/>
<path d="M1070 247.5 H1075.5 V233.5 H1111 L1124 247.5" fill="#e6e6ea" stroke="#000" stroke-width="1.2"/>
<rect x="1076" y="246.5" width="47" height="1.5" fill="#e6e6ea"/>
</svg>
<div class="t" style="left:1081px;top:235px;font-size:11px;font-weight:bold;letter-spacing:-0.4px">Color</div>
<div class="t" style="left:1125px;top:235px;font-size:11px;letter-spacing:-0.5px">Swatches</div>
<div class="t" style="left:1187px;top:235px;font-size:11px;letter-spacing:-0.5px">Styles</div>
<div class="a" style="left:1263px;top:234px;width:12px;height:12px;border-radius:6px;background:radial-gradient(circle at 50% 40%,#ffffff 40%,#d8d8e4 100%)"><svg class="a" style="left:0;top:0" width="12" height="12"><path d="M4.5 3 L8 6 L4.5 9 Z" fill="#111"/></svg></div>
<div class="a" style="left:1091px;top:269px;width:19px;height:19px;background:#fff;border:1px solid #000"></div>
<div class="a" style="left:1078px;top:256px;width:20px;height:20px;background:#000;border:1px solid #000;box-shadow:inset 0 0 0 1px #fff, inset 0 0 0 2px #000"></div>
<div class="t" style="left:1112px;top:257px;font-size:11px">R</div>
<div class="a" style="left:1125px;top:258px;width:101px;height:6px;background:linear-gradient(90deg,#000,#d01818);border-bottom:1px solid #444"></div>
<svg class="a" style="left:1120px;top:264px" width="11" height="9"><path d="M5.5 1 L10 7.5 H1 Z" fill="#d8e8d0" stroke="#506850" stroke-width="1"/></svg>
<div class="a" style="left:1231px;top:253px;width:32px;height:17px;background:#fff;border:1px solid #c8c8d0"></div>
<div class="t" style="left:1237px;top:257px;font-size:11px">0</div>
<div class="t" style="left:1112px;top:279px;font-size:11px">G</div>
<div class="a" style="left:1125px;top:280px;width:101px;height:6px;background:linear-gradient(90deg,#000,#20c020);border-bottom:1px solid #444"></div>
<svg class="a" style="left:1120px;top:286px" width="11" height="9"><path d="M5.5 1 L10 7.5 H1 Z" fill="#d8e8d0" stroke="#506850" stroke-width="1"/></svg>
<div class="a" style="left:1231px;top:275px;width:32px;height:17px;background:#fff;border:1px solid #c8c8d0"></div>
<div class="t" style="left:1237px;top:279px;font-size:11px">0</div>
<div class="t" style="left:1112px;top:301px;font-size:11px">B</div>
<div class="a" style="left:1125px;top:302px;width:101px;height:6px;background:linear-gradient(90deg,#000,#1010d0);border-bottom:1px solid #444"></div>
<svg class="a" style="left:1120px;top:308px" width="11" height="9"><path d="M5.5 1 L10 7.5 H1 Z" fill="#d8e8d0" stroke="#506850" stroke-width="1"/></svg>
<div class="a" style="left:1231px;top:297px;width:32px;height:17px;background:#fff;border:1px solid #c8c8d0"></div>
<div class="t" style="left:1237px;top:301px;font-size:11px">0</div>
<div class="a" style="left:1075px;top:324px;width:200px;height:17px;background:#000;border:1px solid #000;overflow:hidden"><div class="a" style="left:0;top:0;width:190px;height:15px;background:linear-gradient(transparent 0,transparent 0%,rgba(0,0,0,0) 30%,#000 100%),linear-gradient(90deg,#ff2000 0%,#ffff00 17%,#00c000 33%,#00e0ff 50%,#0010ff 67%,#ff00ff 83%,#ff0010 100%)"></div><div class="a" style="left:190px;top:0;width:8px;height:7px;background:#fff"></div></div>
<div class="a" style="left:1068px;top:347px;width:212px;height:133px;background:#e2e2e8"></div>
<div class="a" style="left:1069px;top:347px;width:210px;height:17px;background:linear-gradient(#5e5e70 0,#5e5e70 1px,#a8a8c0 1px,#b6b6ca 6px,#d0d0dc 11px,#f4f4f8 16px)"></div>
<div class="a" style="left:1068px;top:347px;width:1px;height:133px;background:#686878"></div>
<div class="a" style="left:1069px;top:348px;width:1px;height:131px;background:#fff"></div>
<div class="a" style="left:1279px;top:347px;width:1px;height:133px;background:#7c7c88"></div>
<div class="a" style="left:1278px;top:348px;width:1px;height:131px;background:#fff"></div>
<div class="a" style="left:1277px;top:364px;width:1px;height:114px;background:#b0b0b8"></div>
<div class="a" style="left:1068px;top:479px;width:212px;height:1px;background:#686878"></div>
<div class="a" style="left:1069px;top:478px;width:210px;height:1px;background:#fff"></div>
<div class="a pmin" style="left:1248px;top:350px"></div>
<div class="a pcls" style="left:1264px;top:350px"><svg width="11" height="11" class="a" style="left:0;top:0"><path d="M2.5 2.5 L8.5 8.5 M8.5 2.5 L2.5 8.5" stroke="#fff" stroke-width="1.8"/></svg></div>
<div class="a" style="left:1070px;top:364px;width:207px;height:17px;background:#c9c9cc"></div>
<div class="a" style="left:1070px;top:380px;width:207px;height:1px;background:#000"></div>
<svg class="a" style="left:1068px;top:364px" width="212" height="18" viewBox="1068 364 212 18">
<path d="M1127.5 380.5 V366.5 H1173 L1186 380.5" fill="#e2e2e6" stroke="#000" stroke-width="1.2"/>
<path d="M1070 380.5 H1075.5 V366.5 H1122 L1134 380.5" fill="#e6e6ea" stroke="#000" stroke-width="1.2"/>
<rect x="1076" y="379.5" width="57" height="1.5" fill="#e6e6ea"/>
</svg>
<div class="t" style="left:1081px;top:368px;font-size:11px;font-weight:bold;letter-spacing:-0.4px">History</div>
<div class="t" style="left:1136px;top:368px;font-size:11px;letter-spacing:-0.5px">Actions</div>
<div class="a" style="left:1263px;top:367px;width:12px;height:12px;border-radius:6px;background:radial-gradient(circle at 50% 40%,#ffffff 40%,#d8d8e4 100%)"><svg class="a" style="left:0;top:0" width="12" height="12"><path d="M4.5 3 L8 6 L4.5 9 Z" fill="#111"/></svg></div>
<div class="a" style="left:1070px;top:381px;width:207px;height:1px;background:#fff"></div>
<div class="a" style="left:1070px;top:382px;width:207px;height:1px;background:#000"></div>
<div class="a" style="left:1094px;top:383px;width:168px;height:19px;background:#e2e2e8"></div>
<div class="a" style="left:1070px;top:402px;width:192px;height:1px;background:#fafafa"></div>
<div class="a" style="left:1073px;top:384px;width:18px;height:17px;border:1px solid #c8c8d0;border-right-color:#fff;border-bottom-color:#fff;background:#e4e4ea"></div>
<svg class="a" style="left:1102px;top:385px" width="18" height="17"><rect x="1.5" y="0.5" width="6" height="2" fill="#888"/><rect x="1.5" y="2.5" width="12" height="12" fill="#f4f4f4" stroke="#333"/><path d="M4 6 H11 M4 8.5 H11 M4 11 H9" stroke="#333"/><path d="M11 10 L16 13.5 L11 16.5 Z" fill="#111"/></svg>
<div class="t" style="left:1127px;top:386px;font-size:11px;letter-spacing:-0.55px">New Layer</div>
<div class="a" style="left:1094px;top:403px;width:168px;height:19px;background:#e2e2e8"></div>
<div class="a" style="left:1070px;top:422px;width:192px;height:1px;background:#fafafa"></div>
<div class="a" style="left:1073px;top:404px;width:18px;height:17px;border:1px solid #c8c8d0;border-right-color:#fff;border-bottom-color:#fff;background:#e4e4ea"></div>
<svg class="a" style="left:1102px;top:405px" width="18" height="17"><rect x="1.5" y="0.5" width="6" height="2" fill="#888"/><rect x="1.5" y="2.5" width="12" height="12" fill="#f4f4f4" stroke="#333"/><path d="M4 6 H11 M4 8.5 H11 M4 11 H9" stroke="#333"/><path d="M11 10 L16 13.5 L11 16.5 Z" fill="#111"/></svg>
<div class="t" style="left:1127px;top:406px;font-size:11px;letter-spacing:-0.55px">Select Canvas</div>
<div class="a" style="left:1094px;top:423px;width:168px;height:19px;background:#e2e2e8"></div>
<div class="a" style="left:1070px;top:442px;width:192px;height:1px;background:#fafafa"></div>
<div class="a" style="left:1073px;top:424px;width:18px;height:17px;border:1px solid #c8c8d0;border-right-color:#fff;border-bottom-color:#fff;background:#e4e4ea"></div>
<svg class="a" style="left:1102px;top:425px" width="18" height="17"><rect x="1.5" y="1.5" width="14" height="13" fill="#f4f4f4" stroke="#333"/><rect x="1.5" y="1.5" width="14" height="2.5" fill="#777"/><path d="M4 8 H5 M7 8 H13 M4 11 H5 M7 11 H13" stroke="#333"/></svg>
<div class="t" style="left:1127px;top:426px;font-size:11px;letter-spacing:-0.55px">Stroke</div>
<div class="a" style="left:1094px;top:443px;width:168px;height:19px;background:#b8b8c4"></div>
<div class="a" style="left:1070px;top:462px;width:192px;height:1px;background:#fafafa"></div>
<div class="a" style="left:1073px;top:444px;width:18px;height:17px;border:1px solid #c8c8d0;border-right-color:#fff;border-bottom-color:#fff;background:#e4e4ea"></div>
<svg class="a" style="left:1102px;top:445px" width="18" height="17"><rect x="1.5" y="0.5" width="6" height="2" fill="#888"/><rect x="1.5" y="2.5" width="12" height="12" fill="#f4f4f4" stroke="#333"/><path d="M4 6 H11 M4 8.5 H11 M4 11 H9" stroke="#333"/><path d="M11 10 L16 13.5 L11 16.5 Z" fill="#111"/></svg>
<div class="t" style="left:1127px;top:446px;font-size:11px;font-weight:bold;letter-spacing:-0.3px">Deselect</div>
<div class="a" style="left:1093px;top:383px;width:2px;height:80px;background:#000"></div>
<svg class="a" style="left:1090px;top:445px" width="12" height="14"><path d="M1.5 1.5 H6 L10 7 L6 12.5 H1.5 Z" fill="#fff" stroke="#111" stroke-width="1.2"/></svg>
<div class="a" style="left:1262px;top:383px;width:15px;height:79px;background:#f4f4f6"></div>
<div class="a sbtn" style="left:1262px;top:384px"><svg width="15" height="16"><path d="M3.5 9.5 L7.5 5.5 L11.5 9.5" fill="none" stroke="#222" stroke-width="1.8"/></svg></div>
<div class="a sbtn" style="left:1262px;top:446px"><svg width="15" height="16"><path d="M3.5 6 L7.5 10 L11.5 6" fill="none" stroke="#222" stroke-width="1.8"/></svg></div>
<div class="a" style="left:1262px;top:437px;width:15px;height:8px;background:linear-gradient(#fafafa,#d8d8e0);border:1px solid #c0c0c8;border-radius:2px"></div>
<div class="a" style="left:1070px;top:462px;width:207px;height:1px;background:#000"></div>
<svg class="a" style="left:1182px;top:464px" width="16" height="12"><rect x="1.5" y="1.5" width="12" height="9" fill="#e8e8e8" stroke="#333"/><rect x="1.5" y="1.5" width="12" height="2" fill="#888"/><rect x="4" y="5.5" width="7" height="3" fill="none" stroke="#333" stroke-width="0.8"/></svg>
<svg class="a" style="left:1212px;top:464px" width="16" height="12"><rect x="1.5" y="3.5" width="13" height="8" fill="#e8e8e8" stroke="#333"/><circle cx="8" cy="7.5" r="2.5" fill="#ccc" stroke="#333"/><rect x="10" y="1.5" width="3" height="2" fill="#333"/></svg>
<svg class="a" style="left:1242px;top:463px" width="13" height="14"><path d="M3 4.5 H10 L9 12.5 H4 Z" fill="#f0f0f0" stroke="#222" stroke-width="1.2"/><path d="M2 3.5 H11" stroke="#222" stroke-width="1.5"/><path d="M5 2.5 Q6.5 0 8 2.5" fill="none" stroke="#222"/><path d="M5.5 6 V11 M7.5 6 V11" stroke="#333"/></svg>
<div class="a" style="left:1262px;top:463px;width:2px;height:15px;background:#111"></div>
<svg class="a" style="left:1265px;top:465px" width="12" height="12"><g fill="#b4b4bc"><rect x="9" y="1" width="2" height="2"/><rect x="5" y="5" width="2" height="2"/><rect x="9" y="5" width="2" height="2"/><rect x="1" y="9" width="2" height="2"/><rect x="5" y="9" width="2" height="2"/><rect x="9" y="9" width="2" height="2"/></g></svg>
<div class="a" style="left:1068px;top:480px;width:212px;height:256px;background:#e2e2e8"></div>
<div class="a" style="left:1069px;top:480px;width:210px;height:17px;background:linear-gradient(#5e5e70 0,#5e5e70 1px,#a8a8c0 1px,#b6b6ca 6px,#d0d0dc 11px,#f4f4f8 16px)"></div>
<div class="a" style="left:1068px;top:480px;width:1px;height:256px;background:#686878"></div>
<div class="a" style="left:1069px;top:481px;width:1px;height:254px;background:#fff"></div>
<div class="a" style="left:1279px;top:480px;width:1px;height:256px;background:#7c7c88"></div>
<div class="a" style="left:1278px;top:481px;width:1px;height:254px;background:#fff"></div>
<div class="a" style="left:1277px;top:497px;width:1px;height:237px;background:#b0b0b8"></div>
<div class="a" style="left:1068px;top:735px;width:212px;height:1px;background:#686878"></div>
<div class="a" style="left:1069px;top:734px;width:210px;height:1px;background:#fff"></div>
<div class="a pmin" style="left:1248px;top:483px"></div>
<div class="a pcls" style="left:1264px;top:483px"><svg width="11" height="11" class="a" style="left:0;top:0"><path d="M2.5 2.5 L8.5 8.5 M8.5 2.5 L2.5 8.5" stroke="#fff" stroke-width="1.8"/></svg></div>
<div class="a" style="left:1070px;top:497px;width:207px;height:17px;background:#c9c9cc"></div>
<div class="a" style="left:1070px;top:513px;width:207px;height:1px;background:#000"></div>
<svg class="a" style="left:1068px;top:497px" width="212" height="18" viewBox="1068 497 212 18">
<path d="M1185.5 513.5 V499.5 H1221 L1234 513.5" fill="#e2e2e6" stroke="#000" stroke-width="1.2"/>
<path d="M1124.5 513.5 V499.5 H1179 L1191 513.5" fill="#e2e2e6" stroke="#000" stroke-width="1.2"/>
<path d="M1070 513.5 H1075.5 V499.5 H1121 L1132 513.5" fill="#e6e6ea" stroke="#000" stroke-width="1.2"/>
<rect x="1076" y="512.5" width="55" height="1.5" fill="#e6e6ea"/>
</svg>
<div class="t" style="left:1081px;top:501px;font-size:11px;font-weight:bold;letter-spacing:-0.4px">Layers</div>
<div class="t" style="left:1132px;top:501px;font-size:11px;letter-spacing:-0.5px">Channels</div>
<div class="t" style="left:1193px;top:501px;font-size:11px;letter-spacing:-0.5px">Paths</div>
<div class="a" style="left:1263px;top:500px;width:12px;height:12px;border-radius:6px;background:radial-gradient(circle at 50% 40%,#ffffff 40%,#d8d8e4 100%)"><svg class="a" style="left:0;top:0" width="12" height="12"><path d="M4.5 3 L8 6 L4.5 9 Z" fill="#111"/></svg></div>
<div class="a" style="left:1075px;top:519px;width:98px;height:16px;background:#fff;border:1px solid #b8b8c4"></div>
<div class="t" style="left:1078px;top:522px;font-size:11px;letter-spacing:-0.3px">Normal</div>
<div class="a" style="left:1157px;top:520px;width:15px;height:14px;background:linear-gradient(#f4f4f8,#c8c8d4);border:1px solid #b0b0bc;border-radius:1px"><svg width="13" height="12"><path d="M3 4 L6.5 7.5 L10 4" fill="none" stroke="#222" stroke-width="1.8"/></svg></div>
<div class="t" style="left:1180px;top:522px;font-size:11px;letter-spacing:-0.3px">Opacity:</div>
<div class="a" style="left:1223px;top:519px;width:50px;height:15px;background:#fff;border:1px solid #c0c0c8"></div>
<div class="t" style="left:1229px;top:522px;font-size:11px;letter-spacing:-0.4px">100%</div>
<div class="a" style="left:1258px;top:520px;width:14px;height:13px;background:linear-gradient(#f8f8fa,#d4d4dc);border-left:1px solid #c0c0c8"><svg width="13" height="13"><path d="M4.5 3 L8.5 6.5 L4.5 10 Z" fill="#111"/></svg></div>
<div class="a" style="left:1070px;top:538px;width:207px;height:1px;background:#c4c4cc"></div>
<div class="a" style="left:1070px;top:539px;width:207px;height:1px;background:#fff"></div>
<div class="t" style="left:1075px;top:546px;font-size:11px;letter-spacing:-0.3px">Lock:</div>
<svg class="a" style="left:1108px;top:543px" width="72" height="14"><rect x="1.5" y="1.5" width="11" height="11" fill="#fff" stroke="#444"/><rect x="4" y="4" width="3" height="3" fill="#bbb"/><rect x="7" y="7" width="3" height="3" fill="#bbb"/><path d="M21 12 Q22 8 25 8 L31 2 L32 3 L27 9 Q26 12 21 12 Z" fill="#ddd" stroke="#333" stroke-width="0.9"/><path d="M44 1 V13 M38 7 H50" stroke="#111" stroke-width="1.3"/><path d="M44 0 L42 3 H46 Z M44 14 L42 11 H46 Z M37 7 L40 5 V9 Z M51 7 L48 5 V9 Z" fill="#111"/><path d="M60 6 V4.5 Q63.5 1 67 4.5 V6" fill="none" stroke="#222" stroke-width="1.5"/><rect x="58.5" y="6.5" width="10" height="6" fill="#444" stroke="#222"/></svg>
<div class="t" style="left:1203px;top:546px;font-size:11px;letter-spacing:-0.3px">Fill:</div>
<div class="a" style="left:1223px;top:542px;width:50px;height:15px;background:#fff;border:1px solid #c0c0c8"></div>
<div class="t" style="left:1229px;top:545px;font-size:11px;letter-spacing:-0.4px">100%</div>
<div class="a" style="left:1258px;top:543px;width:14px;height:13px;background:linear-gradient(#f8f8fa,#d4d4dc);border-left:1px solid #c0c0c8"><svg width="13" height="13"><path d="M4.5 3 L8.5 6.5 L4.5 10 Z" fill="#111"/></svg></div>
<div class="a" style="left:1070px;top:562px;width:207px;height:1px;background:#c4c4cc"></div>
<div class="a" style="left:1070px;top:563px;width:207px;height:1px;background:#000"></div>
<div class="a" style="left:1116px;top:564px;width:146px;height:22px;background:#b8b8c4"></div>
<div class="a" style="left:1070px;top:586px;width:192px;height:1px;background:#fafafa"></div>
<div class="a" style="left:1072px;top:565px;width:20px;height:20px;border:1px solid #c8c8d0;border-right-color:#fff;border-bottom-color:#fff;background:#e4e4ea"></div>
<div class="a" style="left:1094px;top:565px;width:20px;height:20px;border:1px solid #c8c8d0;border-right-color:#fff;border-bottom-color:#fff;background:#e4e4ea"></div>
<svg class="a" style="left:1074px;top:569px" width="16" height="11"><path d="M1 5.5 Q8 -1 15 5.5 Q8 11 1 5.5 Z" fill="#fff" stroke="#222" stroke-width="1.2"/><circle cx="8" cy="5.5" r="2.8" fill="#111"/><path d="M2 4 Q8 0 14 4" fill="none" stroke="#111" stroke-width="1.2"/></svg>
<div class="a" style="left:1070px;top:609px;width:192px;height:1px;background:#fafafa"></div>
<div class="a" style="left:1072px;top:588px;width:20px;height:20px;border:1px solid #c8c8d0;border-right-color:#fff;border-bottom-color:#fff;background:#e4e4ea"></div>
<div class="a" style="left:1094px;top:588px;width:20px;height:20px;border:1px solid #c8c8d0;border-right-color:#fff;border-bottom-color:#fff;background:#e4e4ea"></div>
<svg class="a" style="left:1074px;top:592px" width="16" height="11"><path d="M1 5.5 Q8 -1 15 5.5 Q8 11 1 5.5 Z" fill="#fff" stroke="#222" stroke-width="1.2"/><circle cx="8" cy="5.5" r="2.8" fill="#111"/><path d="M2 4 Q8 0 14 4" fill="none" stroke="#111" stroke-width="1.2"/></svg>
<svg class="a" style="left:1096px;top:568px" width="16" height="14"><path d="M2 12 Q3 8 6 8 L13 2 L14 3 L8 10 Q7 13 2 12 Z" fill="#d8d8d8" stroke="#333" stroke-width="0.9"/></svg>
<div class="a" style="left:1115px;top:564px;width:2px;height:46px;background:#000"></div><div class="a" style="left:1070px;top:609px;width:192px;height:1px;background:#000"></div>
<div class="a" style="left:1117px;top:566px;width:34px;height:19px;border:1px solid #000;background:#fff;padding:2px"><div style="width:100%;height:100%;border:1px solid #222;background-color:#fff;background-image:linear-gradient(45deg,#ccc 25%,transparent 25%,transparent 75%,#ccc 75%),linear-gradient(45deg,#ccc 25%,transparent 25%,transparent 75%,#ccc 75%);background-size:8px 8px;background-position:0 0,4px 4px"></div></div>
<div class="t" style="left:1153px;top:568px;font-size:11px;font-weight:bold;letter-spacing:0px">Layer 1</div>
<div class="a" style="left:1118px;top:590px;width:33px;height:16px;border:1px solid #111;overflow:hidden;background:#8a949c"><svg class="a" style="left:0;top:0" width="31" height="14" viewBox="0 0 398 148" preserveAspectRatio="none"><use href="#texg"/></svg></div>
<div class="t" style="left:1154px;top:591px;font-size:11px;font-style:italic;letter-spacing:-0.3px">Background</div>
<svg class="a" style="left:1248px;top:591px" width="12" height="13"><path d="M3 6 V4.5 Q6 1 9 4.5 V6" fill="none" stroke="#333" stroke-width="1.3"/><rect x="1.5" y="6.5" width="9" height="6" fill="#f0f0f0" stroke="#333"/></svg>
<div class="a" style="left:1262px;top:564px;width:15px;height:154px;background:#f6f6f8"></div>
<div class="a" style="left:1262px;top:565px;width:15px;height:16px;background:#ececee;border:1px solid #f0f0f2"><svg width="13" height="14"><path d="M3 8.5 L6.5 5 L10 8.5" fill="none" stroke="#c8c8cc" stroke-width="1.6"/></svg></div>
<div class="a" style="left:1262px;top:702px;width:15px;height:16px;background:#ececee;border:1px solid #f0f0f2"><svg width="13" height="14"><path d="M3 5 L6.5 8.5 L10 5" fill="none" stroke="#c8c8cc" stroke-width="1.6"/></svg></div>
<div class="a" style="left:1070px;top:718px;width:207px;height:1px;background:#000"></div>
<svg class="a" style="left:1098px;top:720px" width="150" height="14"><circle cx="8" cy="6.5" r="5.5" fill="#333" stroke="#111"/><path d="M6 11 Q8 6 9 3 Q10 1.5 11 2" fill="none" stroke="#fff" stroke-width="1.3"/><path d="M5.5 6 H10" stroke="#fff" stroke-width="1.1"/><path d="M12 11 H15 L13.5 13 Z" fill="#111"/><rect x="31.5" y="1.5" width="12" height="11" fill="#999" stroke="#222"/><circle cx="37.5" cy="7" r="3.5" fill="#fff" stroke="#333" stroke-width="0.8"/><path d="M59.5 4.5 H63 L64 3 H70.5 V11.5 H59.5 Z" fill="#e8e8e8" stroke="#333"/><circle cx="93" cy="7" r="5.5" fill="#fff" stroke="#222"/><path d="M89 11 L97 3 A5.5 5.5 0 0 0 89 11 Z" fill="#222"/><path d="M97 11 H100 L98.5 13 Z" fill="#111"/><rect x="117.5" y="2.5" width="9" height="9" fill="#fff" stroke="#222"/><rect x="117" y="2" width="3" height="3" fill="#222"/><rect x="121" y="7" width="3" height="4" fill="#333"/></svg>
<svg class="a" style="left:1242px;top:720px" width="13" height="14"><path d="M3 4.5 H10 L9 12.5 H4 Z" fill="#f0f0f0" stroke="#222" stroke-width="1.2"/><path d="M2 3.5 H11" stroke="#222" stroke-width="1.5"/><path d="M5 2.5 Q6.5 0 8 2.5" fill="none" stroke="#222"/><path d="M5.5 6 V11 M7.5 6 V11" stroke="#333"/></svg>
<div class="a" style="left:1262px;top:719px;width:2px;height:15px;background:#111"></div>
<svg class="a" style="left:1265px;top:721px" width="12" height="12"><g fill="#b4b4bc"><rect x="9" y="1" width="2" height="2"/><rect x="5" y="5" width="2" height="2"/><rect x="9" y="5" width="2" height="2"/><rect x="1" y="9" width="2" height="2"/><rect x="5" y="9" width="2" height="2"/><rect x="9" y="9" width="2" height="2"/></g></svg>
<!-- status bar -->
<div class="a" style="left:0;top:752px;width:1280px;height:18px;background:#e2e2e8;border-top:1px solid #fff"></div>
<div class="a" style="left:0;top:753px;width:48px;height:17px;background:#fff;border:1px solid #000"></div>
<div class="t tah" style="left:12px;top:756px;letter-spacing:-0.6px">100%</div>
<div class="t tah" style="left:53px;top:756px;letter-spacing:-0.65px">Doc: 175.8K/234.4K</div>
<div class="a" style="left:236px;top:753px;width:1px;height:16px;background:#fff"></div>
<div class="a" style="left:253px;top:753px;width:1px;height:16px;background:#fff"></div>
<svg class="a" style="left:240px;top:755px" width="10" height="12"><path d="M1 0.5 L7.5 5.8 L1 11 Z" fill="#000"/></svg>
<div class="t tah" style="left:257px;top:756px;letter-spacing:-0.32px">Click and drag to move layer or selection.&nbsp; Use Shift and Alt for additional options.</div>
<div class="a" style="left:1277px;top:753px;width:1px;height:16px;background:#c8c8d0"></div>
<!-- taskbar -->
<div class="a" style="left:0;top:768px;width:1280px;height:32px;background:linear-gradient(#fafafc 0,#fafafc 2px,#8c8c9c 2px,#8c8c9c 3px,#fcfcfe 3px,#f4f4f8 5px,#a4a4b8 7px,#a0a0b4 9px,#b4b6c4 14px,#d4d6d8 20px,#e2e2e2 26px,#e4e4e4 29px,#a8a8b8 31px)"></div>

<!-- start button -->
<div class="a" style="left:0;top:770px;width:97px;height:30px;border-radius:0 12px 12px 0;background:linear-gradient(#4a9a4a 0,#8ad88a 3px,#4cb44c 8px,#2e9a2e 16px,#2a8a2a 24px,#1c6a1c 30px);box-shadow:inset -2px 0 2px rgba(0,40,0,0.5)"></div>
<svg class="a" style="left:10px;top:775px" width="20" height="19" viewBox="0 0 20 19">
  <path d="M2 3 Q5 1 9 3 L8 9 Q4 7 1 9 Z" fill="#f06020"/>
  <path d="M10 3 Q14 5 18 3 L17 9 Q13 11 9 9 Z" fill="#60c030"/>
  <path d="M1 10 Q4 8 8 10 L7 16 Q3 14 0 16 Z" fill="#3070e0"/>
  <path d="M9 10 Q13 12 17 10 L16 16 Q12 18 8 16 Z" fill="#f0c010"/>
</svg>
<div class="t" style="left:35px;top:778px;font-size:17px;font-weight:bold;font-style:italic;color:#fff;text-shadow:1px 1px 1px #1a4a1a">start</div>
<!-- quick launch -->
<svg class="a" style="left:108px;top:775px" width="70" height="20">
  <circle cx="9" cy="10" r="7.5" fill="#e8f0e8" stroke="#90a890"/><path d="M7 14 V5 L12 4 V12" fill="none" stroke="#4a8a4a" stroke-width="1.5"/><circle cx="6" cy="14" r="1.8" fill="#4a8a4a"/><circle cx="11" cy="12.5" r="1.8" fill="#4a8a4a"/>
  <circle cx="32" cy="10" r="7.5" fill="#d0d8f0" stroke="#506088"/><circle cx="32" cy="10" r="4.5" fill="#2040a0"/><path d="M30.5 7.5 L34.5 10 L30.5 12.5 Z" fill="#fff"/>
  <circle cx="55" cy="10" r="7.5" fill="#e07020"/><circle cx="56" cy="9" r="4.5" fill="#304a90"/><path d="M49 8 Q52 3 58 4 Q54 6 55 10 Q52 12 49 8 Z" fill="#f09030"/>
</svg>
<!-- task buttons -->
<div class="a tbtn" style="left:183px;top:773px"></div>
<svg class="a" style="left:192px;top:777px" width="17" height="17"><circle cx="8.5" cy="8.5" r="7.5" fill="#e8f0e8" stroke="#90a890"/><path d="M6.5 12.5 V4 L11.5 3 V11" fill="none" stroke="#4a8a4a" stroke-width="1.5"/><circle cx="5.5" cy="12.5" r="1.8" fill="#4a8a4a"/><circle cx="10.5" cy="11" r="1.8" fill="#4a8a4a"/></svg>
<div class="t" style="left:210px;top:780px;font-size:11px;letter-spacing:-0.4px;color:#000">iTunes</div>
<div class="a tbtn" style="left:343px;top:773px"></div>
<svg class="a" style="left:352px;top:777px" width="17" height="17"><circle cx="8.5" cy="8.5" r="7.5" fill="#e07020"/><circle cx="9.5" cy="7.5" r="4.5" fill="#304a90"/><path d="M2 7 Q5 2 11 3 Q7 5 8 9 Q5 11 2 7 Z" fill="#f09030"/></svg>
<div class="t" style="left:370px;top:780px;font-size:11px;letter-spacing:-0.1px;color:#000">FileFront Gaming For...</div>
<div class="a tbtn" style="left:502px;top:773px;width:159px;background:linear-gradient(#8a909c,#6c7280 30%,#606674 80%,#7a808c);border-color:#505664"></div>
<svg class="a" style="left:511px;top:777px" width="17" height="17"><rect x="1.5" y="2.5" width="13" height="13" rx="2" fill="#f8f8e8" stroke="#c0c0c0"/><path d="M4 14 L8 9 L14 3 L15 6 L10 11 Z" fill="#7aa83a"/><path d="M4 14 L7 10 L9 12 Z" fill="#8a6a3a"/></svg>
<div class="t" style="left:532px;top:780px;font-size:11px;letter-spacing:-0.2px;color:#fff">Adobe Photoshop</div>
<div class="a tbtn" style="left:663px;top:773px"></div>
<svg class="a" style="left:672px;top:777px" width="17" height="17"><path d="M4 3 L12 3 L11 15 L6 15 Z" fill="#d8b070" stroke="#806030"/><path d="M5 3 L3 1 M8 3 V0 M11 3 L13 1" stroke="#c04020" stroke-width="1.5"/><path d="M6 6 H10" stroke="#60a040" stroke-width="2"/></svg>
<div class="t" style="left:691px;top:780px;font-size:11px;letter-spacing:-0.3px;color:#000">2 - Paint</div>
<!-- tray -->
<div class="a" style="left:1152px;top:770px;width:128px;height:30px;background:linear-gradient(#fafafe 0,#f0f0f6 6px,#dcdce6 18px,#c8c8d6 30px);border-left:1px solid #9a9aa8"></div>
<div class="a" style="left:1142px;top:776px;width:18px;height:18px;border-radius:9px;background:radial-gradient(circle at 40% 35%,#f0f0f8,#9a9ab0 80%);border:1px solid #6a6a80"></div>
<svg class="a" style="left:1142px;top:776px" width="18" height="18"><path d="M10.5 5 L7 9 L10.5 13" fill="none" stroke="#fff" stroke-width="2.2"/></svg>
<svg class="a" style="left:1162px;top:776px" width="110" height="18">
  <rect x="2" y="5" width="8" height="7" fill="#3a4a8a"/><rect x="1" y="12" width="9" height="3" fill="#5a6aa8"/><path d="M12 4 Q14 7 12 10 M15 2 Q18 7 15 12" fill="none" stroke="#333" stroke-width="1"/>
  <circle cx="25" cy="9" r="6" fill="#b0b0b8" stroke="#505060"/><circle cx="24" cy="8" r="3" fill="#d8d8e0" stroke="#606070"/>
  <rect x="40" y="3" width="9" height="14" rx="2" fill="#2030c8" stroke="#101060"/><rect x="42" y="1" width="5" height="2" fill="#2030c8"/>
  <path d="M54 14 L58 5 H64 L62 9 H67 L66 5 H71 L68 14 Z" fill="#e02020"/><text x="56.5" y="12.5" font-family="Liberation Sans" font-weight="bold" font-style="italic" font-size="9" fill="#fff">ATI</text>
</svg>
<div class="t" style="left:1239px;top:780px;font-size:11px;letter-spacing:0.1px;color:#000">14:36</div>
</body></html>
